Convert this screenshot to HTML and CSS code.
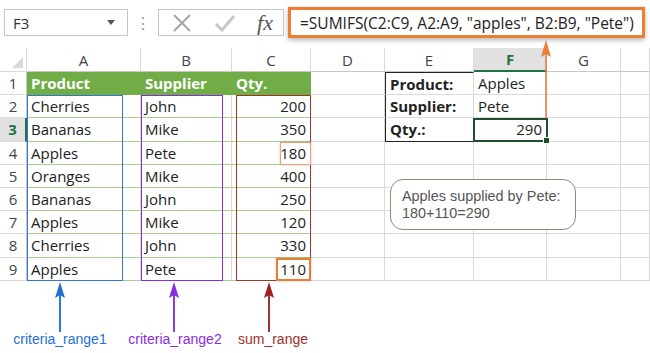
FILE: index.html
```html
<!DOCTYPE html>
<html lang="en">
<head>
    <meta charset="UTF-8">
    <title>SUMIFS example</title>
    <link rel="stylesheet" href="styles.css">
</head>
<body>
    <div class="page">
        <div class="formula-bar">
            <div class="name-box">
                <span>F3</span>
                <svg class="drop" width="8" height="5" viewBox="0 0 8 5"><polygon points="0,0 8,0 4,5" fill="#555"/></svg>
            </div>
            <div class="dots">&#8942;</div>
            <div class="fx-buttons">
                <svg width="22" height="22" viewBox="0 0 22 22" stroke="#a6a6a6" stroke-width="2" fill="none">
                    <path d="M3 3l16 16M19 3L3 19"/>
                </svg>
                <svg width="22" height="22" viewBox="0 0 22 22" stroke="#c8c8c8" stroke-width="3" fill="none">
                    <polyline points="2 12 8 18 20 4"/>
                </svg>
                <span class="fx">fx</span>
            </div>
            <div class="formula">=SUMIFS(C2:C9, A2:A9, "apples", B2:B9, "Pete")</div>
        </div>

        <div class="sheet">
            <div class="cell corner"><svg width="11" height="11" viewBox="0 0 11 11"><polygon points="11,0 11,11 0,11" fill="#d9d9d9"/></svg></div>
            <div class="cell ch">A</div>
            <div class="cell ch">B</div>
            <div class="cell ch">C</div>
            <div class="cell ch">D</div>
            <div class="cell ch">E</div>
            <div class="cell ch active">F</div>
            <div class="cell ch">G</div>
            <div class="cell ch"></div>

            <div class="cell rh">1</div>
            <div class="cell head">Product</div>
            <div class="cell head">Supplier</div>
            <div class="cell head">Qty.</div>
            <div class="cell"></div>
            <div class="cell lbl box-top box-left">Product:</div>
            <div class="cell">Apples</div>
            <div class="cell"></div>
            <div class="cell"></div>

            <div class="cell rh">2</div>
            <div class="cell tbl">Cherries</div>
            <div class="cell tbl">John</div>
            <div class="cell tbl num">200</div>
            <div class="cell"></div>
            <div class="cell lbl box-left">Supplier:</div>
            <div class="cell">Pete</div>
            <div class="cell"></div>
            <div class="cell"></div>

            <div class="cell rh active">3</div>
            <div class="cell tbl">Bananas</div>
            <div class="cell tbl">Mike</div>
            <div class="cell tbl num">350</div>
            <div class="cell"></div>
            <div class="cell lbl box-left box-bottom">Qty.:</div>
            <div class="cell num">290</div>
            <div class="cell"></div>
            <div class="cell"></div>

            <div class="cell rh">4</div>
            <div class="cell tbl">Apples</div>
            <div class="cell tbl">Pete</div>
            <div class="cell tbl num">180</div>
            <div class="cell"></div>
            <div class="cell"></div>
            <div class="cell"></div>
            <div class="cell"></div>
            <div class="cell"></div>

            <div class="cell rh">5</div>
            <div class="cell tbl">Oranges</div>
            <div class="cell tbl">Mike</div>
            <div class="cell tbl num">400</div>
            <div class="cell"></div>
            <div class="cell"></div>
            <div class="cell"></div>
            <div class="cell"></div>
            <div class="cell"></div>

            <div class="cell rh">6</div>
            <div class="cell tbl">Bananas</div>
            <div class="cell tbl">John</div>
            <div class="cell tbl num">250</div>
            <div class="cell"></div>
            <div class="cell"></div>
            <div class="cell"></div>
            <div class="cell"></div>
            <div class="cell"></div>

            <div class="cell rh">7</div>
            <div class="cell tbl">Apples</div>
            <div class="cell tbl">Mike</div>
            <div class="cell tbl num">120</div>
            <div class="cell"></div>
            <div class="cell"></div>
            <div class="cell"></div>
            <div class="cell"></div>
            <div class="cell"></div>

            <div class="cell rh">8</div>
            <div class="cell tbl">Cherries</div>
            <div class="cell tbl">John</div>
            <div class="cell tbl num">330</div>
            <div class="cell"></div>
            <div class="cell"></div>
            <div class="cell"></div>
            <div class="cell"></div>
            <div class="cell"></div>

            <div class="cell rh">9</div>
            <div class="cell tbl">Apples</div>
            <div class="cell tbl">Pete</div>
            <div class="cell tbl num">110</div>
            <div class="cell"></div>
            <div class="cell"></div>
            <div class="cell"></div>
            <div class="cell"></div>
            <div class="cell"></div>
        </div>

        <!-- range outlines and annotations -->
        <div class="range range-a"></div>
        <div class="range range-b"></div>
        <div class="range range-c"></div>
        <div class="range hit hit-4"></div>
        <div class="range hit hit-9"></div>
        <div class="range selected"><span class="handle"></span></div>

        <svg class="arrows" width="650" height="353" viewBox="0 0 650 353">
            <line x1="546" y1="50" x2="546" y2="118" stroke="#e8763a" stroke-width="1.5"/>
            <polygon points="546,40 551,57 546,54 541,57" fill="#ee7d3a"/>

            <line x1="60" y1="292" x2="60" y2="332" stroke="#2f78d8" stroke-width="2"/>
            <polygon points="60,282 65,298 60,295 55,298" fill="#1f6fd6"/>

            <line x1="174" y1="292" x2="174" y2="332" stroke="#8a3be0" stroke-width="2"/>
            <polygon points="174,282 179,298 174,295 169,298" fill="#8a2be2"/>

            <line x1="269" y1="292" x2="269" y2="332" stroke="#a03232" stroke-width="2"/>
            <polygon points="269,282 274,298 269,295 264,298" fill="#9e1f1f"/>
        </svg>

        <div class="label label-1">criteria_range1</div>
        <div class="label label-2">criteria_range2</div>
        <div class="label label-3">sum_range</div>

        <div class="callout">Apples supplied by Pete:<br>180+110=290</div>
    </div>
</body>
</html>
```

FILE: styles.css
```css
:root {
    --grid-line: #dadada;
    --table-green: #70ad47;
    --table-line: #a9cf8d;
    --orange: #ed7d31;
    --sel-green: #217346;
}

body {
    margin: 0;
    background: #ffffff;
    font-family: 'Open Sans', 'Noto Sans', sans-serif;
    color: #222;
}

.page {
    position: relative;
    width: 650px;
    height: 353px;
    overflow: hidden;
}

/* formula bar */
.formula-bar {
    display: flex;
    align-items: center;
    height: 45px;
    padding: 0 5px 0 4px;
}

.name-box {
    width: 124px;
    height: 27px;
    box-sizing: border-box;
    border: 1px solid #c6c6c6;
    display: flex;
    align-items: center;
    justify-content: space-between;
    padding: 0 12px 0 8px;
    font-size: 15px;
    color: #333;
}

.dots {
    width: 30px;
    text-align: center;
    color: #9a9a9a;
    font-size: 16px;
}

.fx-buttons {
    width: 126px;
    height: 27px;
    box-sizing: border-box;
    border: 1px solid #c6c6c6;
    display: flex;
    align-items: center;
    justify-content: space-between;
    padding: 0 10px 0 12px;
    margin-right: 4px;
}

.fx {
    font-family: 'Liberation Serif', serif;
    font-style: italic;
    font-size: 22px;
    color: #555;
    line-height: 1;
}

.formula {
    flex: 1;
    height: 31px;
    box-sizing: border-box;
    border: 3px solid var(--orange);
    box-shadow: 0 2px 5px rgba(0, 0, 0, 0.3);
    display: flex;
    align-items: center;
    padding-left: 9px;
    font-size: 15.5px;
    color: #222;
    white-space: nowrap;
    overflow: hidden;
}

/* grid */
.sheet {
    margin-top: 3px;
    display: grid;
    grid-template-columns: 27px 114px 91px 79px 74px 89px 73px 74px 29px;
    grid-template-rows: 24px repeat(9, 23.2px);
    font-size: 15px;
}

.cell {
    box-sizing: border-box;
    border-right: 1px solid var(--grid-line);
    border-bottom: 1px solid var(--grid-line);
    padding: 0 4px;
    display: flex;
    align-items: center;
    white-space: nowrap;
    overflow: hidden;
}

.corner {
    justify-content: flex-end;
    align-items: flex-end;
    padding: 0 3px 3px 0;
}

.ch {
    justify-content: center;
    color: #444;
    border-bottom-color: #c8c8c8;
}

.ch.active {
    background: #e1e1e1;
    color: var(--sel-green);
    font-weight: 700;
    border-bottom: 2px solid var(--sel-green);
}

.rh {
    justify-content: center;
    color: #444;
    border-right-color: #c8c8c8;
}

.rh.active {
    background: #e1e1e1;
    color: var(--sel-green);
    font-weight: 700;
    border-right: 2px solid var(--sel-green);
}

.head {
    background: var(--table-green);
    color: #ffffff;
    font-weight: 700;
    border-right-color: var(--table-green);
    border-bottom-color: var(--table-green);
}

.tbl {
    border-bottom-color: var(--table-line);
}

.num {
    justify-content: flex-end;
}

.lbl {
    font-weight: 700;
}

.box-top {
    border-top: 1px solid #222;
}

.box-left {
    border-left: 1px solid #222;
}

.box-bottom {
    border-bottom: 1px solid #222;
}

/* overlays */
.range {
    position: absolute;
    box-sizing: border-box;
    pointer-events: none;
}

.range-a {
    left: 27px;
    top: 95px;
    width: 96px;
    height: 186px;
    border: 1.5px solid #2f78d8;
}

.range-b {
    left: 141px;
    top: 95px;
    width: 82px;
    height: 186px;
    border: 1.5px solid #8a2be2;
}

.range-c {
    left: 236px;
    top: 95px;
    width: 75px;
    height: 186px;
    border: 1.5px solid #a3342c;
}

.hit {
    border: 1.5px solid #f0a070;
    box-shadow: 0 0 3px rgba(0, 0, 0, 0.2);
}

.hit-4 {
    left: 280px;
    top: 142px;
    width: 31px;
    height: 23px;
}

.hit-9 {
    left: 276px;
    top: 258px;
    width: 35px;
    height: 23px;
    border: 2px solid var(--orange);
}

.selected {
    left: 473px;
    top: 118px;
    width: 75px;
    height: 24px;
    border: 2px solid #1d4f2c;
}

.handle {
    position: absolute;
    right: -4px;
    bottom: -4px;
    width: 5px;
    height: 5px;
    background: #1d4f2c;
    border: 1px solid #ffffff;
}

.arrows {
    position: absolute;
    left: 0;
    top: 0;
    pointer-events: none;
}

.label {
    position: absolute;
    top: 331px;
    font-family: 'Liberation Sans', Arial, sans-serif;
    font-size: 14px;
    transform: translateX(-50%);
    white-space: nowrap;
}

.label-1 {
    left: 60px;
    color: #1f6fd6;
}

.label-2 {
    left: 175px;
    color: #8a2be2;
}

.label-3 {
    left: 273px;
    color: #a0302a;
}

.callout {
    position: absolute;
    left: 390px;
    top: 179px;
    width: 186px;
    height: 51px;
    box-sizing: border-box;
    border: 1.5px solid #8e8e72;
    border-radius: 13px;
    background: #ffffff;
    padding: 8px 11px 0;
    font-family: 'Liberation Sans', Arial, sans-serif;
    font-size: 14.4px;
    line-height: 17px;
    color: #555;
}
```
